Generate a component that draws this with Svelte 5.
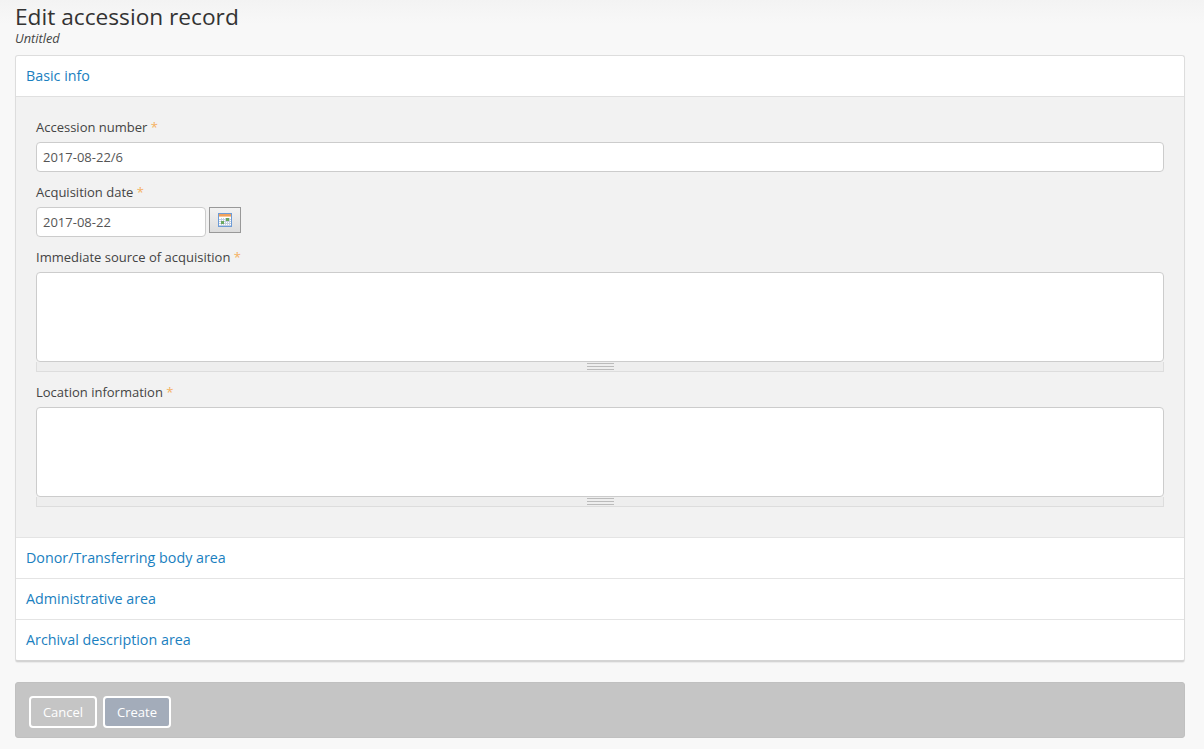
<script>
  const sections = ['Donor/Transferring body area', 'Administrative area', 'Archival description area'];
</script>

<div class="page">
  <header class="head">
    <h1>Edit accession record</h1>
    <div class="sub">Untitled</div>
  </header>

  <section class="card">
    <a class="sec-head" href="#basic">Basic info</a>
    <div class="sec-body">
      <div class="field">
        <label for="num">Accession number <span class="req">*</span></label>
        <input id="num" class="text" value="2017-08-22/6" />
      </div>
      <div class="field">
        <label for="date">Acquisition date <span class="req">*</span></label>
        <div class="date-row">
          <input id="date" class="text date" value="2017-08-22" />
          <button class="cal" aria-label="Pick a date">
            <svg width="14" height="14" viewBox="0 0 14 14" shape-rendering="crispEdges">
              <rect x="0.5" y="0.5" width="13" height="13" fill="#fff" stroke="#6d9bd6" />
              <rect x="1" y="1" width="12" height="2" fill="#f0a15c" />
              <rect x="1" y="3" width="12" height="1" fill="#f7c89a" />
              <path d="M1 6.5h12M1 8.5h12M1 10.5h12M1 12.5h12M3.5 5v8M5.5 5v8M7.5 5v8M9.5 5v8M11.5 5v8" stroke="#c3cfe0" stroke-width="1" fill="none" />
              <rect x="3" y="8" width="3" height="3" fill="#6aa85f" />
              <rect x="8" y="5" width="3" height="3" fill="#6aa85f" />
            </svg>
          </button>
        </div>
      </div>
      <div class="field">
        <label for="src">Immediate source of acquisition <span class="req">*</span></label>
        <textarea id="src"></textarea>
        <div class="grip"><span></span></div>
      </div>
      <div class="field">
        <label for="loc">Location information <span class="req">*</span></label>
        <textarea id="loc"></textarea>
        <div class="grip"><span></span></div>
      </div>
    </div>
    {#each sections as s}
      <a class="sec-head next" href="#section">{s}</a>
    {/each}
  </section>

  <footer class="actions">
    <button class="btn">Cancel</button>
    <button class="btn primary">Create</button>
  </footer>
</div>

<style>
  :global(body) {
    margin: 0;
    background: #f8f8f8;
    font-family: "Open Sans", sans-serif;
    color: #333;
  }
  .page {
    padding: 0 19px 11px 15px;
    box-sizing: border-box;
    height: 749px;
    overflow: hidden;
    background: linear-gradient(#f3f3f3, #f8f8f8 24px);
  }
  .head {
    height: 55px;
    box-sizing: border-box;
    padding-top: 1px;
  }
  h1 {
    margin: 0;
    font-size: 22.7px;
    line-height: 31px;
    font-weight: 400;
    color: #333;
  }
  .sub {
    font-size: 12.8px;
    line-height: 12px;
    font-style: italic;
    color: #444;
  }
  .card {
    background: #fff;
    border: 1px solid #ddd;
    border-bottom: 2px solid #d4d4d4;
    border-radius: 3px;
    box-shadow: 0 1px 1px rgba(0, 0, 0, 0.06);
    width: 1170px;
    box-sizing: border-box;
    height: 607px;
  }
  .sec-head {
    display: block;
    height: 40px;
    line-height: 40px;
    padding-left: 10px;
    font-size: 14.3px;
    color: #1a80c0;
    text-decoration: none;
  }
  .next {
    height: 41px;
    box-sizing: border-box;
    border-top: 1px solid #e4e4e4;
  }
  .next:first-of-type { border-top: 0; }
  .sec-body {
    background: #f2f2f2;
    border-top: 1px solid #e0e0e0;
    height: 441px;
    box-sizing: border-box;
    padding: 15px 20px 0;
  }
  .field { margin-bottom: 5px; }
  label {
    display: block;
    height: 30px;
    line-height: 30px;
    font-size: 13px;
    color: #444;
  }
  .req { color: #f5b060; }
  .text, textarea {
    display: block;
    width: 100%;
    box-sizing: border-box;
    border: 1px solid #ccc;
    border-radius: 4px;
    background: #fff;
    font-family: inherit;
    font-size: 13px;
    color: #555;
    margin: 0;
    outline: none;
  }
  .text {
    height: 30px;
    padding: 0 6px;
  }
  textarea {
    height: 90px;
    resize: none;
    padding: 6px;
  }
  .date-row {
    display: flex;
    align-items: flex-start;
    gap: 3px;
  }
  .date { width: 170px; }
  .cal {
    width: 32px;
    height: 26px;
    padding: 0;
    display: flex;
    align-items: center;
    justify-content: center;
    border: 1px solid #999;
    background: linear-gradient(#f2f2f2, #dcdcdc);
  }
  .grip {
    height: 10px;
    box-sizing: border-box;
    background: #eee;
    border: 1px solid #ddd;
    border-top: 0;
    display: flex;
    align-items: center;
    justify-content: center;
  }
  .grip span {
    width: 27px;
    height: 5px;
    border-top: 1px solid #bbb;
    border-bottom: 1px solid #bbb;
    background: linear-gradient(#bbb, #bbb) center / 100% 1px no-repeat;
  }
  .actions {
    margin-top: 20px;
    width: 1170px;
    height: 56px;
    box-sizing: border-box;
    background: #c5c5c5;
    border-radius: 3px;
    border: 1px solid #c0c0c0;
    padding: 13px;
    display: flex;
    gap: 6px;
    align-items: flex-start;
  }
  .btn {
    width: 68px;
    height: 32px;
    box-sizing: border-box;
    padding: 0;
    border: 2px solid #fff;
    border-radius: 4px;
    background: transparent;
    color: #fff;
    font-family: inherit;
    font-size: 13px;
  }
  .primary {
    background: #a3acba;
  }
</style>
